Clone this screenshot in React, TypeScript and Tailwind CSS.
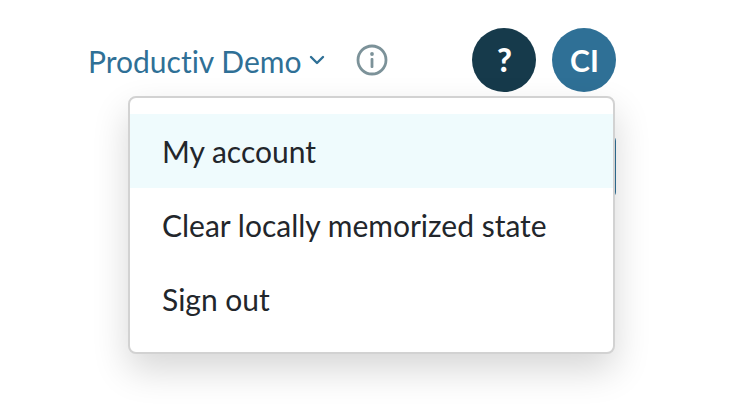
import { useState } from "react";

const menuItems = ["My account", "Clear locally memorized state", "Sign out"];

const App = () => {
  const [active] = useState(0);

  return (
    <div className="relative h-[409px] w-[737px] overflow-hidden bg-white font-['Lato',sans-serif] [font-variant-ligatures:none]">
      <div className="mt-[28px] flex h-[64px] items-center pl-[88px]">
        <span className="pt-[2px] text-[30px] leading-none text-[#2f7096]">Productiv Demo</span>
        <svg className="ml-[8px] mt-[-1px]" width="16" height="10" viewBox="0 0 16 10" fill="none">
          <path d="M2 2l6 6 6-6" stroke="#2f7096" strokeWidth="2.4" strokeLinecap="round" strokeLinejoin="round" />
        </svg>
        <svg className="ml-[31px]" width="32" height="32" viewBox="0 0 32 32" fill="none">
          <circle cx="16" cy="16" r="14" stroke="#7c9299" strokeWidth="2.8" />
          <circle cx="16" cy="10" r="1.9" fill="#7c9299" />
          <rect x="14.6" y="14" width="2.8" height="10" rx="1" fill="#7c9299" />
        </svg>
        <div className="ml-[84px] flex h-[64px] w-[64px] items-center justify-center rounded-full bg-[#163a4b] text-[32px] font-black text-white">
          ?
        </div>
        <div className="ml-[16px] flex h-[64px] w-[64px] items-center justify-center rounded-full bg-[#2f7096] text-[30px] font-bold text-white">
          CI
        </div>
      </div>

      {/* button peeking out behind the menu */}
      <div className="absolute left-[500px] top-[135px] h-[63px] w-[116px] rounded-[6px] bg-[#2f7096]" />

      <div className="absolute left-[128px] top-[96px] w-[486.5px] rounded-[8px] border-2 border-[#d2d2d2] bg-white py-[16px] shadow-[0_16px_36px_rgba(0,0,0,0.16)]">
        {menuItems.map((item, i) => (
          <div
            key={item}
            className={`flex h-[74px] items-center pl-[32px] text-[30px] leading-none text-[#22262b] ${
              i === active ? "bg-[#effbfd]" : ""
            }`}
          >
            {item}
          </div>
        ))}
      </div>
    </div>
  );
};

export default App;
